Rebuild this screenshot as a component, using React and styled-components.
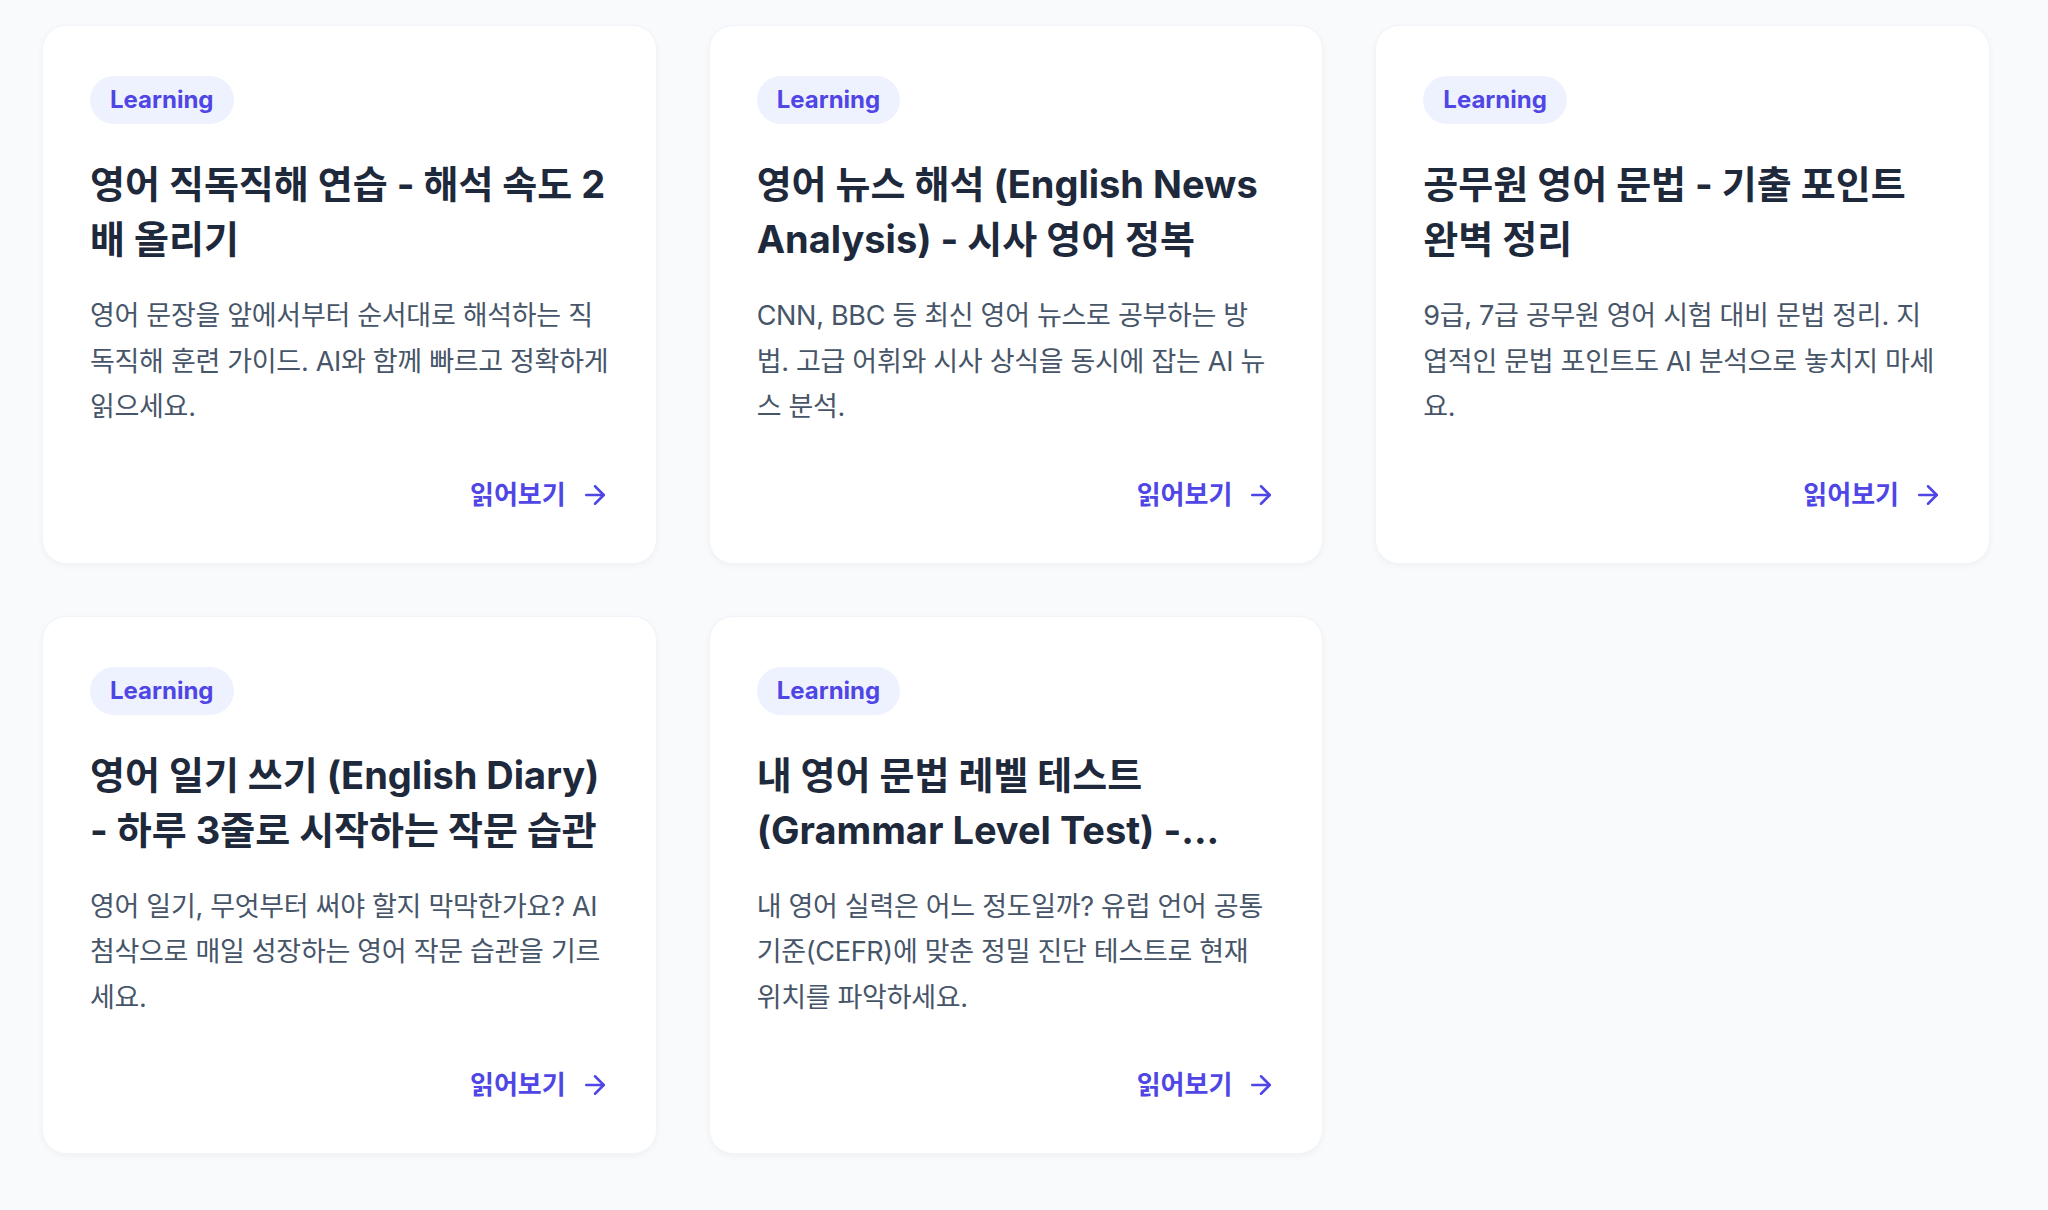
import styled, { createGlobalStyle } from 'styled-components';
import { ArrowRight } from 'lucide-react';

const GlobalStyle = createGlobalStyle`
  body {
    margin: 0;
    background: #f8fafc;
    font-family: Inter, "Noto Sans CJK KR", sans-serif;
  }
`;

const Grid = styled.div`
  display: grid;
  grid-template-columns: repeat(3, 1fr);
  gap: 52px;
  padding: 25px 58px 54px 42px;
`;

const Card = styled.article`
  display: flex;
  flex-direction: column;
  align-items: flex-start;
  background: #fff;
  border: 1px solid #f1f5f9;
  border-radius: 24px;
  box-shadow: 0 2px 6px rgba(15, 23, 42, 0.04);
  padding: 50px 46px 48px 47px;
`;

const Badge = styled.span`
  padding: 8px 20px;
  border-radius: 999px;
  background: #eef2ff;
  color: #4f46e5;
  font-size: 24px;
  line-height: 32px;
  font-weight: 700;
`;

const Title = styled.h3`
  align-self: stretch;
  margin: 33px 0 0;
  color: #1e293b;
  font-size: 38px;
  line-height: 55px;
  font-weight: 700;
  display: -webkit-box;
  -webkit-line-clamp: 2;
  -webkit-box-orient: vertical;
  overflow: hidden;
`;

const Desc = styled.p`
  margin: 26px 0 45px;
  color: #475569;
  font-size: 27px;
  line-height: 45.5px;
  letter-spacing: -0.3px;
`;

const ReadMore = styled.a`
  margin-top: auto;
  align-self: flex-end;
  display: flex;
  align-items: center;
  gap: 14px;
  color: #4f46e5;
  font-size: 26px;
  line-height: 40px;
  font-weight: 600;
  text-decoration: none;
`;

const posts = [
  {
    title: '영어 직독직해 연습 - 해석 속도 2배 올리기',
    desc: '영어 문장을 앞에서부터 순서대로 해석하는 직독직해 훈련 가이드. AI와 함께 빠르고 정확하게 읽으세요.',
  },
  {
    title: '영어 뉴스 해석 (English News Analysis) - 시사 영어 정복',
    desc: 'CNN, BBC 등 최신 영어 뉴스로 공부하는 방법. 고급 어휘와 시사 상식을 동시에 잡는 AI 뉴스 분석.',
  },
  {
    title: '공무원 영어 문법 - 기출 포인트 완벽 정리',
    desc: '9급, 7급 공무원 영어 시험 대비 문법 정리. 지엽적인 문법 포인트도 AI 분석으로 놓치지 마세요.',
  },
  {
    title: '영어 일기 쓰기 (English Diary) - 하루 3줄로 시작하는 작문 습관',
    desc: '영어 일기, 무엇부터 써야 할지 막막한가요? AI 첨삭으로 매일 성장하는 영어 작문 습관을 기르세요.',
  },
  {
    title: '내 영어 문법 레벨 테스트 (Grammar Level Test) -...',
    desc: '내 영어 실력은 어느 정도일까? 유럽 언어 공통 기준(CEFR)에 맞춘 정밀 진단 테스트로 현재 위치를 파악하세요.',
  },
];

const App = () => (
  <>
    <GlobalStyle />
    <Grid>
      {posts.map((post) => (
        <Card key={post.title}>
          <Badge>Learning</Badge>
          <Title>{post.title}</Title>
          <Desc>{post.desc}</Desc>
          <ReadMore href='#'>
            읽어보기
            <ArrowRight size={30} strokeWidth={2} />
          </ReadMore>
        </Card>
      ))}
    </Grid>
  </>
);

export default App;
